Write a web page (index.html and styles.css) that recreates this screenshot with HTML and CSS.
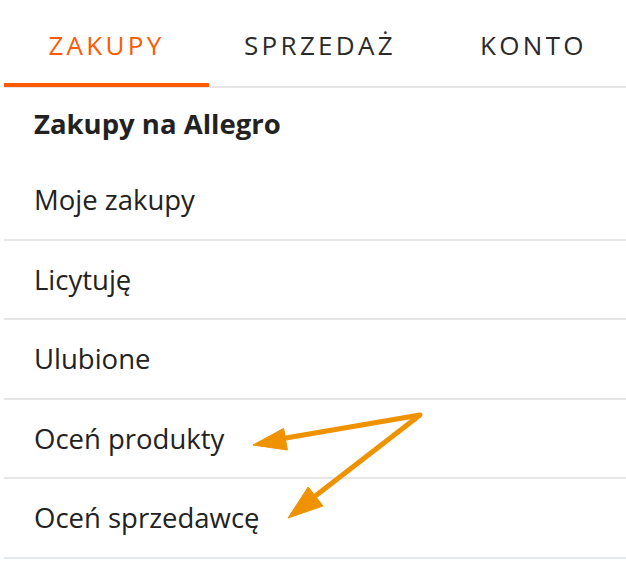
FILE: index.html
```html
<!DOCTYPE html>
<html lang="pl">
<head>
    <meta charset="UTF-8">
    <meta name="viewport" content="width=device-width, initial-scale=1.0">
    <title>Moje Allegro</title>
    <link rel="stylesheet" href="styles.css">
</head>
<body>
    <div class="page">
        <nav class="menu">
            <div class="tabs">
                <a class="tab active" href="#">ZAKUPY</a>
                <a class="tab" href="#">SPRZEDAŻ</a>
                <a class="tab" href="#">KONTO</a>
            </div>
            <div class="section-title">Zakupy na Allegro</div>
            <ul class="items">
                <li><a href="#">Moje zakupy</a></li>
                <li><a href="#">Licytuję</a></li>
                <li><a href="#">Ulubione</a></li>
                <li><a href="#">Oceń produkty</a></li>
                <li><a href="#">Oceń sprzedawcę</a></li>
            </ul>
        </nav>

        <!-- annotation arrows drawn over the menu -->
        <svg class="arrows" viewBox="0 0 626 562">
            <polyline points="280,439 420,415 314,497" />
            <polygon points="253,445 283.6,428.4 287.4,450" />
            <polygon points="288,518 308.2,487 323,506" />
        </svg>
    </div>
</body>
</html>
```

FILE: styles.css
```css
body {
    margin: 0;
    background-color: #fff;
    font-family: "Open Sans", "Noto Sans", Arial, sans-serif;
    color: #222;
}

.page {
    position: relative;
    width: 626px;
    height: 562px;
    overflow: hidden;
}

.menu {
    margin-left: 4px;
}

.tabs {
    display: grid;
    grid-template-columns: 205px 222px 1fr;
    border-bottom: 2px solid #e6e6e6;
}

.tab {
    display: block;
    margin-bottom: -1px;
    padding: 28px 0 20px;
    font-size: 26px;
    line-height: 35px;
    letter-spacing: 3.3px;
    text-align: center;
    text-decoration: none;
    color: #2a2a2a;
    border-bottom: 4px solid transparent;
}

.tab:last-child {
    padding-left: 10px;
}

.tab.active {
    color: #ff5a00;
    border-bottom-color: #ff5a00;
}

.section-title {
    display: flex;
    align-items: center;
    height: 70px;
    padding: 0 0 3px 30px;
    font-size: 27.5px;
    font-weight: 700;
}

.items {
    list-style: none;
    margin: 0;
    padding: 0;
}

.items li {
    display: flex;
    align-items: center;
    height: 77.5px;
    padding-left: 30px;
    border-bottom: 2px solid #e6e6e6;
}

.items li:last-child {
    border-bottom-color: #e4e8ec;
}

.items a {
    font-size: 27.5px;
    color: #222;
    text-decoration: none;
}

.arrows {
    position: absolute;
    left: 0;
    top: 0;
    width: 626px;
    height: 562px;
    pointer-events: none;
}

.arrows polyline {
    fill: none;
    stroke: #ef9200;
    stroke-width: 5;
    stroke-linejoin: round;
    stroke-linecap: round;
}

.arrows polygon {
    fill: #ef9200;
    stroke: #ef9200;
    stroke-width: 1;
    stroke-linejoin: round;
}
```
